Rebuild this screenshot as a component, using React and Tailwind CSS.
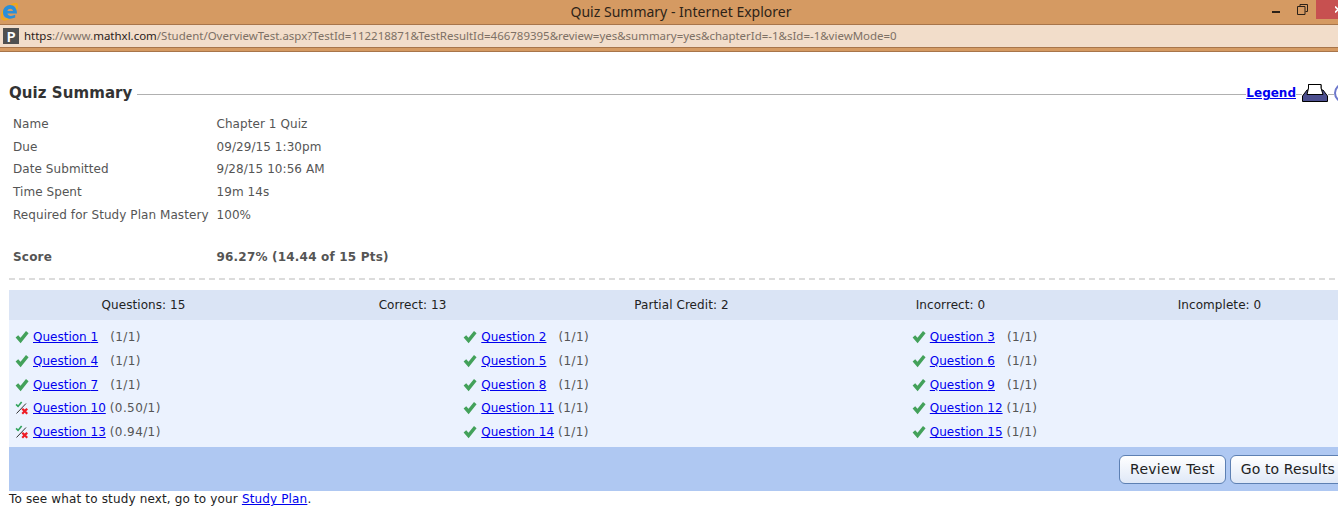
import React from 'react';

const details = [
    ['Name', 'Chapter 1 Quiz'],
    ['Due', '09/29/15 1:30pm'],
    ['Date Submitted', '9/28/15 10:56 AM'],
    ['Time Spent', '19m 14s'],
    ['Required for Study Plan Mastery', '100%'],
];

const stats = ['Questions: 15', 'Correct: 13', 'Partial Credit: 2', 'Incorrect: 0', 'Incomplete: 0'];

const questions = [
    [1, '(1/1)'], [2, '(1/1)'], [3, '(1/1)'],
    [4, '(1/1)'], [5, '(1/1)'], [6, '(1/1)'],
    [7, '(1/1)'], [8, '(1/1)'], [9, '(1/1)'],
    [10, '(0.50/1)', true], [11, '(1/1)'], [12, '(1/1)'],
    [13, '(0.94/1)', true], [14, '(1/1)'], [15, '(1/1)'],
];

const IeLogo = () => (
    <svg width="17" height="18" viewBox="0 0 17 18" className="shrink-0">
        <path d="M3 7 C-0.5 13 -0.5 19 7.5 15.5 M10 2.6 C15 -0.5 18 0.5 15 6.5" fill="none" stroke="#f0a818" strokeWidth="2" />
        <path d="M2 9.5 C2 4.8 5.6 2 9 2 C13 2 16 5.2 16 10.4 L6.4 10.4 C6.8 13.2 10.6 13.6 14.2 11.8 L14.2 14.6 C9 17.2 2 15.4 2 9.5 Z M6.4 8 L12 8 C11.6 4.9 6.9 4.9 6.4 8 Z" fill="#2a8fd8" fillRule="evenodd" />
    </svg>
);

const FullCheck = () => (
    <svg width="14" height="14" viewBox="0 0 14 14" className="shrink-0">
        <path d="M0.6 7.6 L3.2 5.2 L5.5 7.8 L11 1 L13.6 3.2 L5.6 13.2 Z" fill="#43a15a" />
    </svg>
);

const PartialCheck = () => (
    <svg width="14" height="14" viewBox="0 0 14 14" className="shrink-0">
        <path d="M0.5 4 L1.8 2.8 L3 4.2 L6 0.5 L7.3 1.6 L3.1 6.6 Z" fill="#2fa35a" />
        <path d="M1.5 12.5 L11 2.5" stroke="#333" strokeWidth="1" fill="none" />
        <path d="M6.5 8.5 L8 7 L9.7 8.6 L11.5 7 L13 8.5 L11.2 10.2 L13 12 L11.5 13.5 L9.7 11.8 L8 13.5 L6.5 12 L8.2 10.2 Z" fill="#ee1c25" />
    </svg>
);

const Printer = () => (
    <svg width="26" height="18" viewBox="0 0 26 18" className="shrink-0">
        <path d="M6.5 0.5 H19 V6 H21 L25.5 12 V17.5 H0.5 V12 L5 6 H6.5 Z" fill="#4c4f8f" stroke="#000" />
        <path d="M6.5 0.5 H19 V4 L21 10.5 H5 L6.5 4 Z" fill="#fff" stroke="#000" />
    </svg>
);

const App = () => {
    return (
        <div className="w-[1338px] h-[518px] overflow-hidden bg-white font-['DejaVu_Sans',Verdana,sans-serif] text-[12px] tracking-[0.07px]">
            {/* IE window title */}
            <div className="flex items-start h-[24px] bg-[#d59a62] tracking-normal">
                <div className="w-[20px] pl-[1px] pt-[3px]"><IeLogo /></div>
                <div className="flex-1 text-center font-['Noto_Sans',sans-serif] text-[14px] leading-[24px] text-[#2d2318] pl-[70px]">
                    Quiz Summary - Internet Explorer
                </div>
                <div className="w-[8px] h-[2px] mt-[11px] bg-[#2b2118]"></div>
                <svg width="11" height="11" viewBox="0 0 11 11" className="ml-[17px] mt-[4px]">
                    <path d="M3 2.5 V0.5 H10.5 V7.5 H8.5 M0.5 2.5 H8 V10.5 H0.5 Z" fill="none" stroke="#2b2118" />
                </svg>
                <div className="w-[22px] h-[19px] ml-[8px] bg-[#c75050] flex justify-end items-center">
                    <svg width="3" height="7" viewBox="0 0 3 7">
                        <path d="M0 0.5 L3 3.5 L0 6.5" fill="none" stroke="#fff" strokeWidth="1.6" />
                    </svg>
                </div>
            </div>

            {/* Address bar */}
            <div className="flex items-center h-[23px] border-t border-[#a8754a] bg-[#f2ddca] tracking-normal">
                <div className="w-[16px] h-[16px] ml-[3px] bg-[#505050] text-white text-[15px] font-semibold leading-[16px] text-center font-['Noto_Sans',sans-serif]">P</div>
                <div className="ml-[5px] font-['Noto_Sans',sans-serif] text-[11.47px] whitespace-nowrap text-[#7d7065]">
                    <span className="text-[#2a211a]">https</span>://www.<span className="text-[#2a211a]">mathxl.com</span>/Student/OverviewTest.aspx?TestId=112218871&TestResultId=466789395&review=yes&summary=yes&chapterId=-1&sId=-1&viewMode=0
                </div>
            </div>
            <div className="h-[5px] border-y border-[#a8754a] bg-[#d59a62]"></div>

            {/* Page */}
            <div className="w-[1345px] ml-[9px] mt-[30px]">
                <div className="flex items-center h-[22px]">
                    <h1 className="text-[15px] font-bold text-[#333] whitespace-nowrap">Quiz Summary</h1>
                    <div className="flex-1 h-[1px] ml-[5px] mt-[2px] bg-[#b0b0b0]"></div>
                    <a href="#" className="font-bold text-[12px] tracking-normal text-[#0000ee] underline">Legend</a>
                    <div className="w-[6px] h-[1px] mt-[2px] bg-[#b0b0b0]"></div>
                    <Printer />
                    <div className="w-[6px] h-[1px] mt-[2px] bg-[#b0b0b0]"></div>
                    <div className="w-[20px] h-[20px] shrink-0 rounded-full border-2 border-[#6d78cc]"></div>
                </div>

                <div className="mt-[8.9px] pl-[4px] text-[#555]">
                    {details.map(([label, value]) => (
                        <div key={label} className="flex items-center h-[22.6px]">
                            <div className="w-[203.5px] whitespace-nowrap">{label}</div>
                            <div>{value}</div>
                        </div>
                    ))}
                    <div className="flex items-center h-[23px] mt-[20.1px] font-bold tracking-[0.2px]">
                        <div className="w-[203.5px]">Score</div>
                        <div>96.27% (14.44 of 15 Pts)</div>
                    </div>
                </div>

                <div className="w-[1326px] mt-[9px] border-t-2 border-dashed border-[#dcdcdc]"></div>

                <div className="mt-[10px] grid grid-cols-5 h-[30px] items-center bg-[#dae4f5] text-center text-[#222]">
                    {stats.map((stat) => (
                        <div key={stat}>{stat}</div>
                    ))}
                </div>

                <div className="grid grid-cols-[448.3px_448.5px_1fr] h-[127px] pt-[5.3px] pl-[6px] bg-[#ebf2fe] text-[#555] content-start">
                    {questions.map(([num, score, partial]) => (
                        <div key={num} className="flex items-center h-[23.75px] whitespace-nowrap">
                            {partial ? <PartialCheck /> : <FullCheck />}
                            <a href="#" className="ml-[4px] tracking-normal text-[#0000ee] underline">Question {num}</a>
                            <span className={num < 10 ? 'ml-[12px] tracking-[0.4px]' : 'ml-[4px] tracking-[0.4px]'}>{score}</span>
                        </div>
                    ))}
                </div>

                <div className="flex justify-end items-center gap-[4px] h-[44.5px] pr-[8px] bg-[#afc8f2]">
                    <button className="h-[29px] px-[10px] rounded-[6px] border border-[#5d80b3] bg-gradient-to-b from-white to-[#dfe8f7] text-[14px] tracking-[0.25px] text-[#222] whitespace-nowrap">Review Test</button>
                    <button className="h-[29px] px-[10px] rounded-[6px] border border-[#5d80b3] bg-gradient-to-b from-white to-[#dfe8f7] text-[14px] tracking-[0.1px] text-[#222] whitespace-nowrap">Go to Results</button>
                </div>

                <p className="text-[#222] leading-[17px] tracking-[0.15px]">
                    To see what to study next, go to your <a href="#" className="text-[#0000ee] underline">Study Plan</a>.
                </p>
            </div>
        </div>
    );
};

export default App;
